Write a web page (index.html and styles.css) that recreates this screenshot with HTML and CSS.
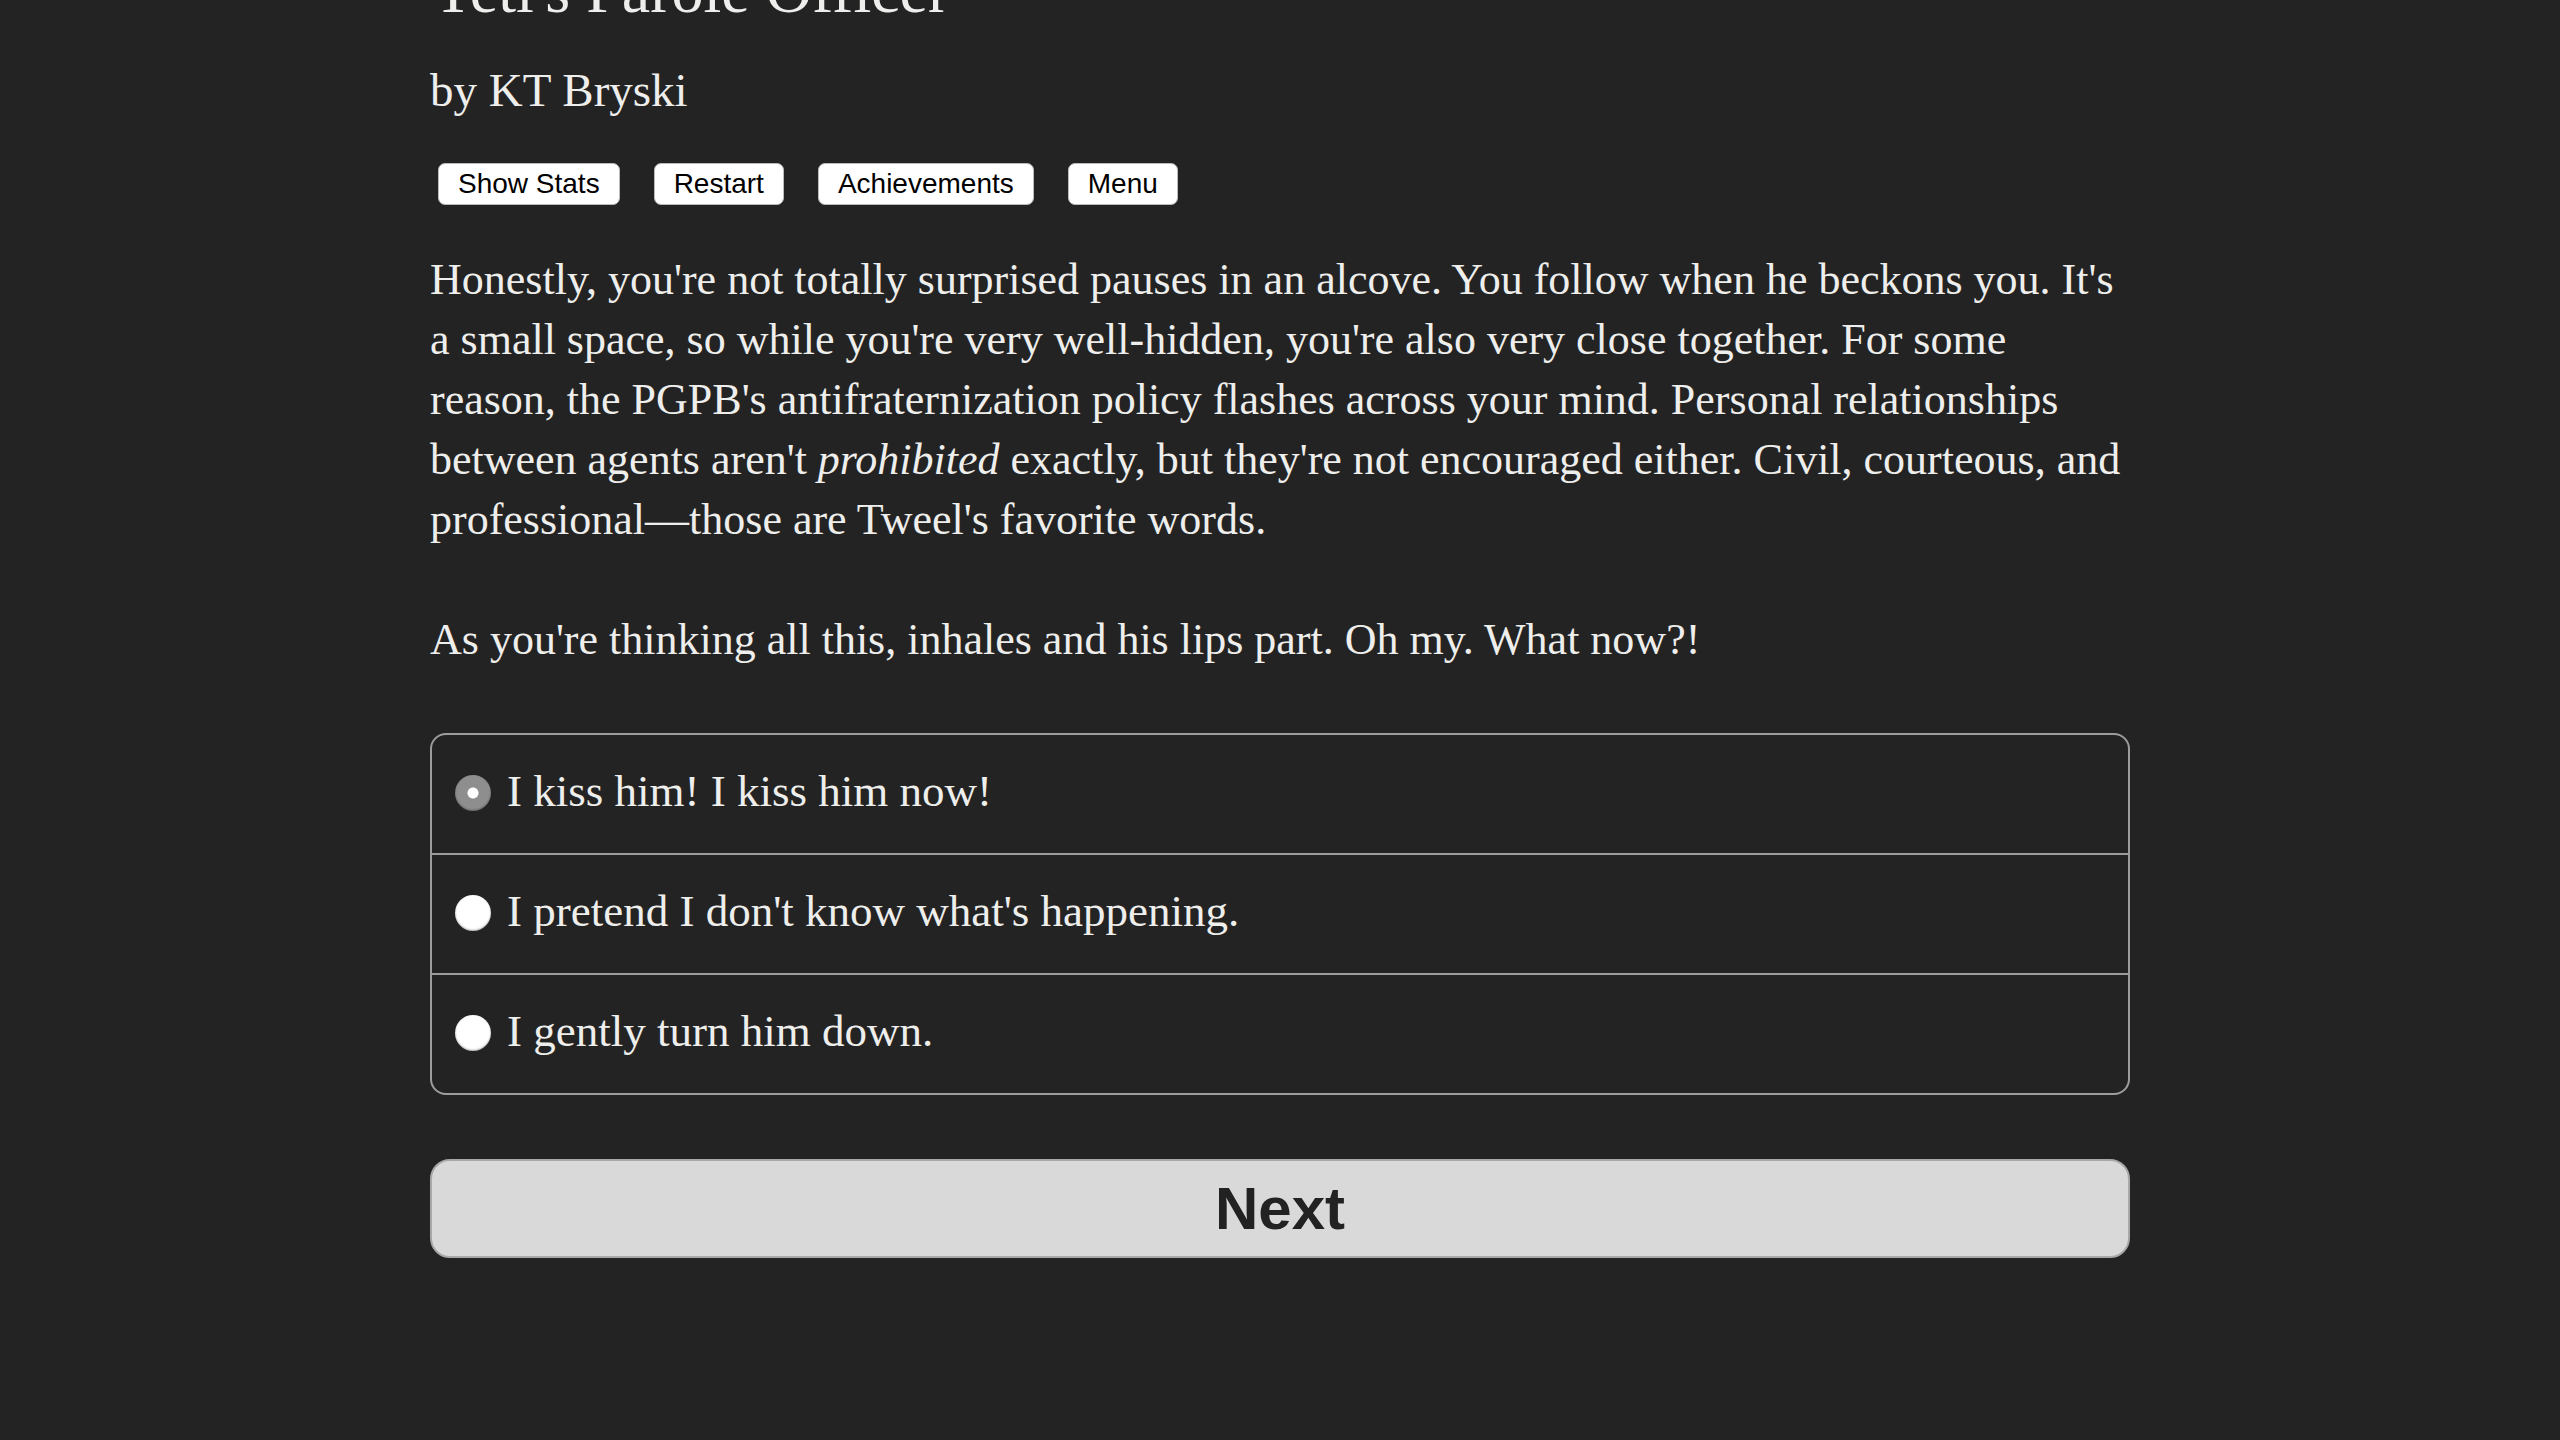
FILE: index.html
```html
<!DOCTYPE html>
<html lang="en">
<head>
    <meta charset="UTF-8">
    <title>Yeti's Parole Officer</title>
    <link rel="stylesheet" href="styles.css">
</head>
<body>
    <div class="page">
        <h1 class="title">Yeti's Parole Officer</h1>
        <h2 class="author">by KT Bryski</h2>

        <div class="buttons">
            <button type="button">Show Stats</button>
            <button type="button">Restart</button>
            <button type="button">Achievements</button>
            <button type="button">Menu</button>
        </div>

        <div class="story">
            <p>Honestly, you're not totally surprised pauses in an alcove. You follow when he beckons you. It's a small space, so while you're very well-hidden, you're also very close together. For some reason, the PGPB's antifraternization policy flashes across your mind. Personal relationships between agents aren't <i>prohibited</i> exactly, but they're not encouraged either. Civil, courteous, and professional&mdash;those are Tweel's favorite words.</p>
            <p>As you're thinking all this, inhales and his lips part. Oh my. What now?!</p>
        </div>

        <form class="choices">
            <label class="choice">
                <input type="radio" name="choice" checked>
                <span>I kiss him! I kiss him now!</span>
            </label>
            <label class="choice">
                <input type="radio" name="choice">
                <span>I pretend I don't know what's happening.</span>
            </label>
            <label class="choice">
                <input type="radio" name="choice">
                <span>I gently turn him down.</span>
            </label>
        </form>

        <button type="button" class="next">Next</button>
    </div>
</body>
</html>
```

FILE: styles.css
```css
body {
    margin: 0;
    background-color: #232323;
    color: #eeeeec;
    font-family: "Liberation Serif", serif;
}
.page {
    width: 1700px;
    margin: 0 auto;
    padding-top: 1px;
}
.title {
    font-size: 64px;
    font-weight: normal;
    line-height: 64px;
    margin: -42px 0 0 0;
}
.author {
    font-size: 47px;
    font-weight: normal;
    line-height: 60px;
    margin: 37px 0 0 0;
}
.buttons {
    display: flex;
    gap: 34px;
    margin-top: 43px;
    padding-left: 8px;
}
.buttons button {
    height: 42px;
    padding: 0 19px;
    background-color: #fff;
    color: #000;
    border: 1px solid #bbb;
    border-radius: 7px;
    font-family: "Liberation Sans", Arial, sans-serif;
    font-size: 28px;
}
.story {
    margin-top: 45px;
    font-size: 44px;
    line-height: 60px;
}
.story p {
    margin: 0 0 60px 0;
}
.choices {
    margin-top: 63px;
    border: 2px solid #9c9c9c;
    border-radius: 16px;
}
.choice {
    display: flex;
    align-items: center;
    gap: 16px;
    height: 112px;
    padding: 0 0 6px 23px;
    font-size: 45px;
    border-top: 2px solid #9c9c9c;
}
.choice:first-child {
    border-top: none;
}
.choice input {
    appearance: none;
    width: 36px;
    height: 36px;
    margin: 4px 0 0 0;
    border-radius: 50%;
    background-color: #fff;
    box-shadow: inset 0 -1px 2px rgba(0, 0, 0, 0.35);
}
.choice input:checked {
    background: radial-gradient(circle, #fff 0 5px, #8e8e8e 6px);
}
.next {
    display: block;
    width: 100%;
    height: 99px;
    margin-top: 64px;
    background-color: #d9d9d9;
    color: #222;
    border: 2px solid #a8a8a8;
    border-radius: 20px;
    font-family: "Liberation Sans", Arial, sans-serif;
    font-size: 60px;
    font-weight: bold;
}
```
